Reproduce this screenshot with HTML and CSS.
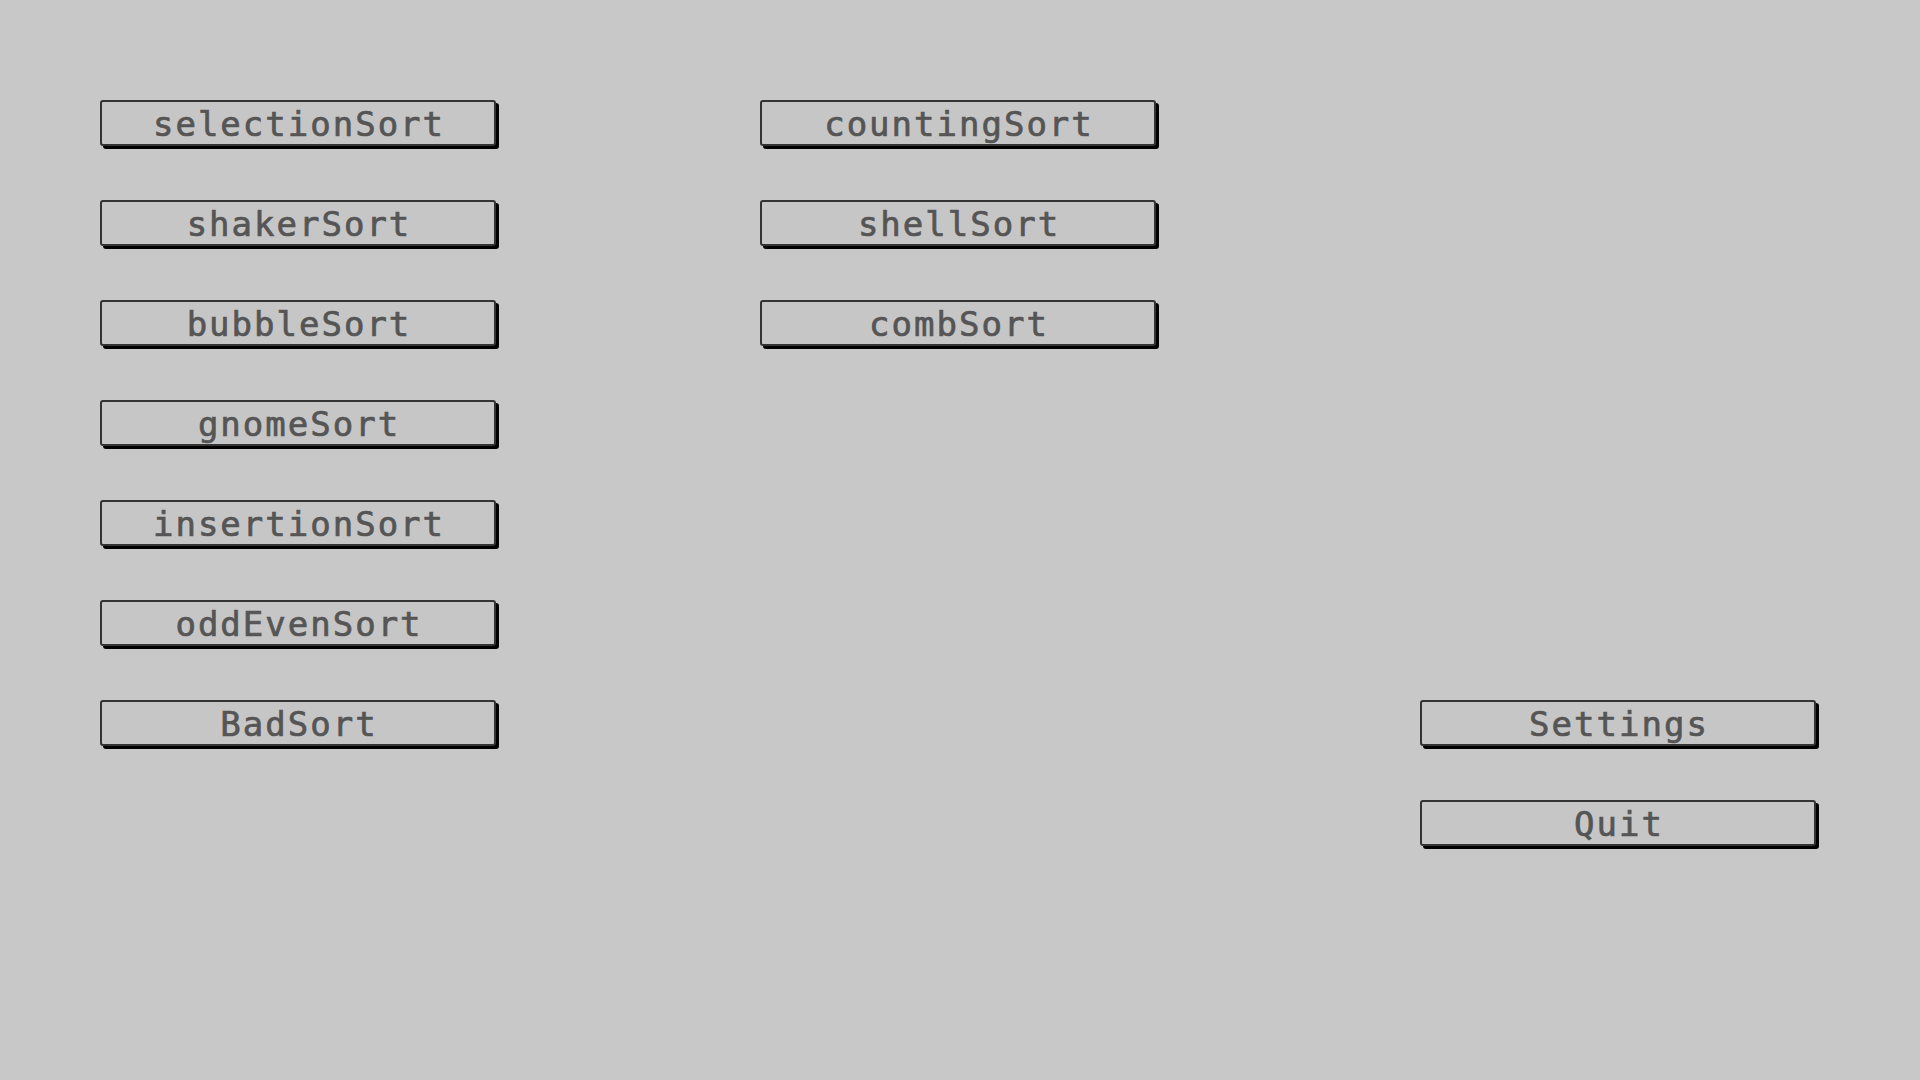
FILE: index.html
```html
<!DOCTYPE html>
<html lang="en">
<head>
    <meta charset="UTF-8">
    <meta name="viewport" content="width=device-width, initial-scale=1.0">
    <title>Sorting Visualizer</title>
    <link rel="stylesheet" href="styles.css">
</head>
<body>
    <div class="menu">
        <div class="menu-column">
            <button class="menu-button">selectionSort</button>
            <button class="menu-button">shakerSort</button>
            <button class="menu-button">bubbleSort</button>
            <button class="menu-button">gnomeSort</button>
            <button class="menu-button">insertionSort</button>
            <button class="menu-button">oddEvenSort</button>
            <button class="menu-button">BadSort</button>
        </div>
        <div class="menu-column">
            <button class="menu-button">countingSort</button>
            <button class="menu-button">shellSort</button>
            <button class="menu-button">combSort</button>
        </div>
        <div class="menu-column options">
            <button class="menu-button">Settings</button>
            <button class="menu-button">Quit</button>
        </div>
    </div>
</body>
</html>
```

FILE: styles.css
```css
html, body {
    margin: 0;
    height: 100%;
}
body {
    background-color: #c8c8c8;
    font-family: "DejaVu Sans Mono", "Liberation Mono", monospace;
    padding: 100px 0 0 100px;
    box-sizing: border-box;
}
.menu {
    display: flex;
    align-items: flex-start;
    gap: 264px;
}
.menu-column {
    display: flex;
    flex-direction: column;
    gap: 54px;
}
.options {
    padding-top: 600px;
}
.menu-button {
    box-sizing: border-box;
    width: 396px;
    height: 46px;
    margin: 0;
    padding: 1px 0 0 2px;
    background-color: #c6c6c6;
    border: 2px solid #333;
    border-radius: 3px;
    box-shadow: 3px 3px 0 #000;
    color: #555;
    font-family: inherit;
    font-size: 34px;
    letter-spacing: 2px;
    line-height: 1;
    -webkit-text-stroke: 0.7px #555;
    cursor: pointer;
}
```
